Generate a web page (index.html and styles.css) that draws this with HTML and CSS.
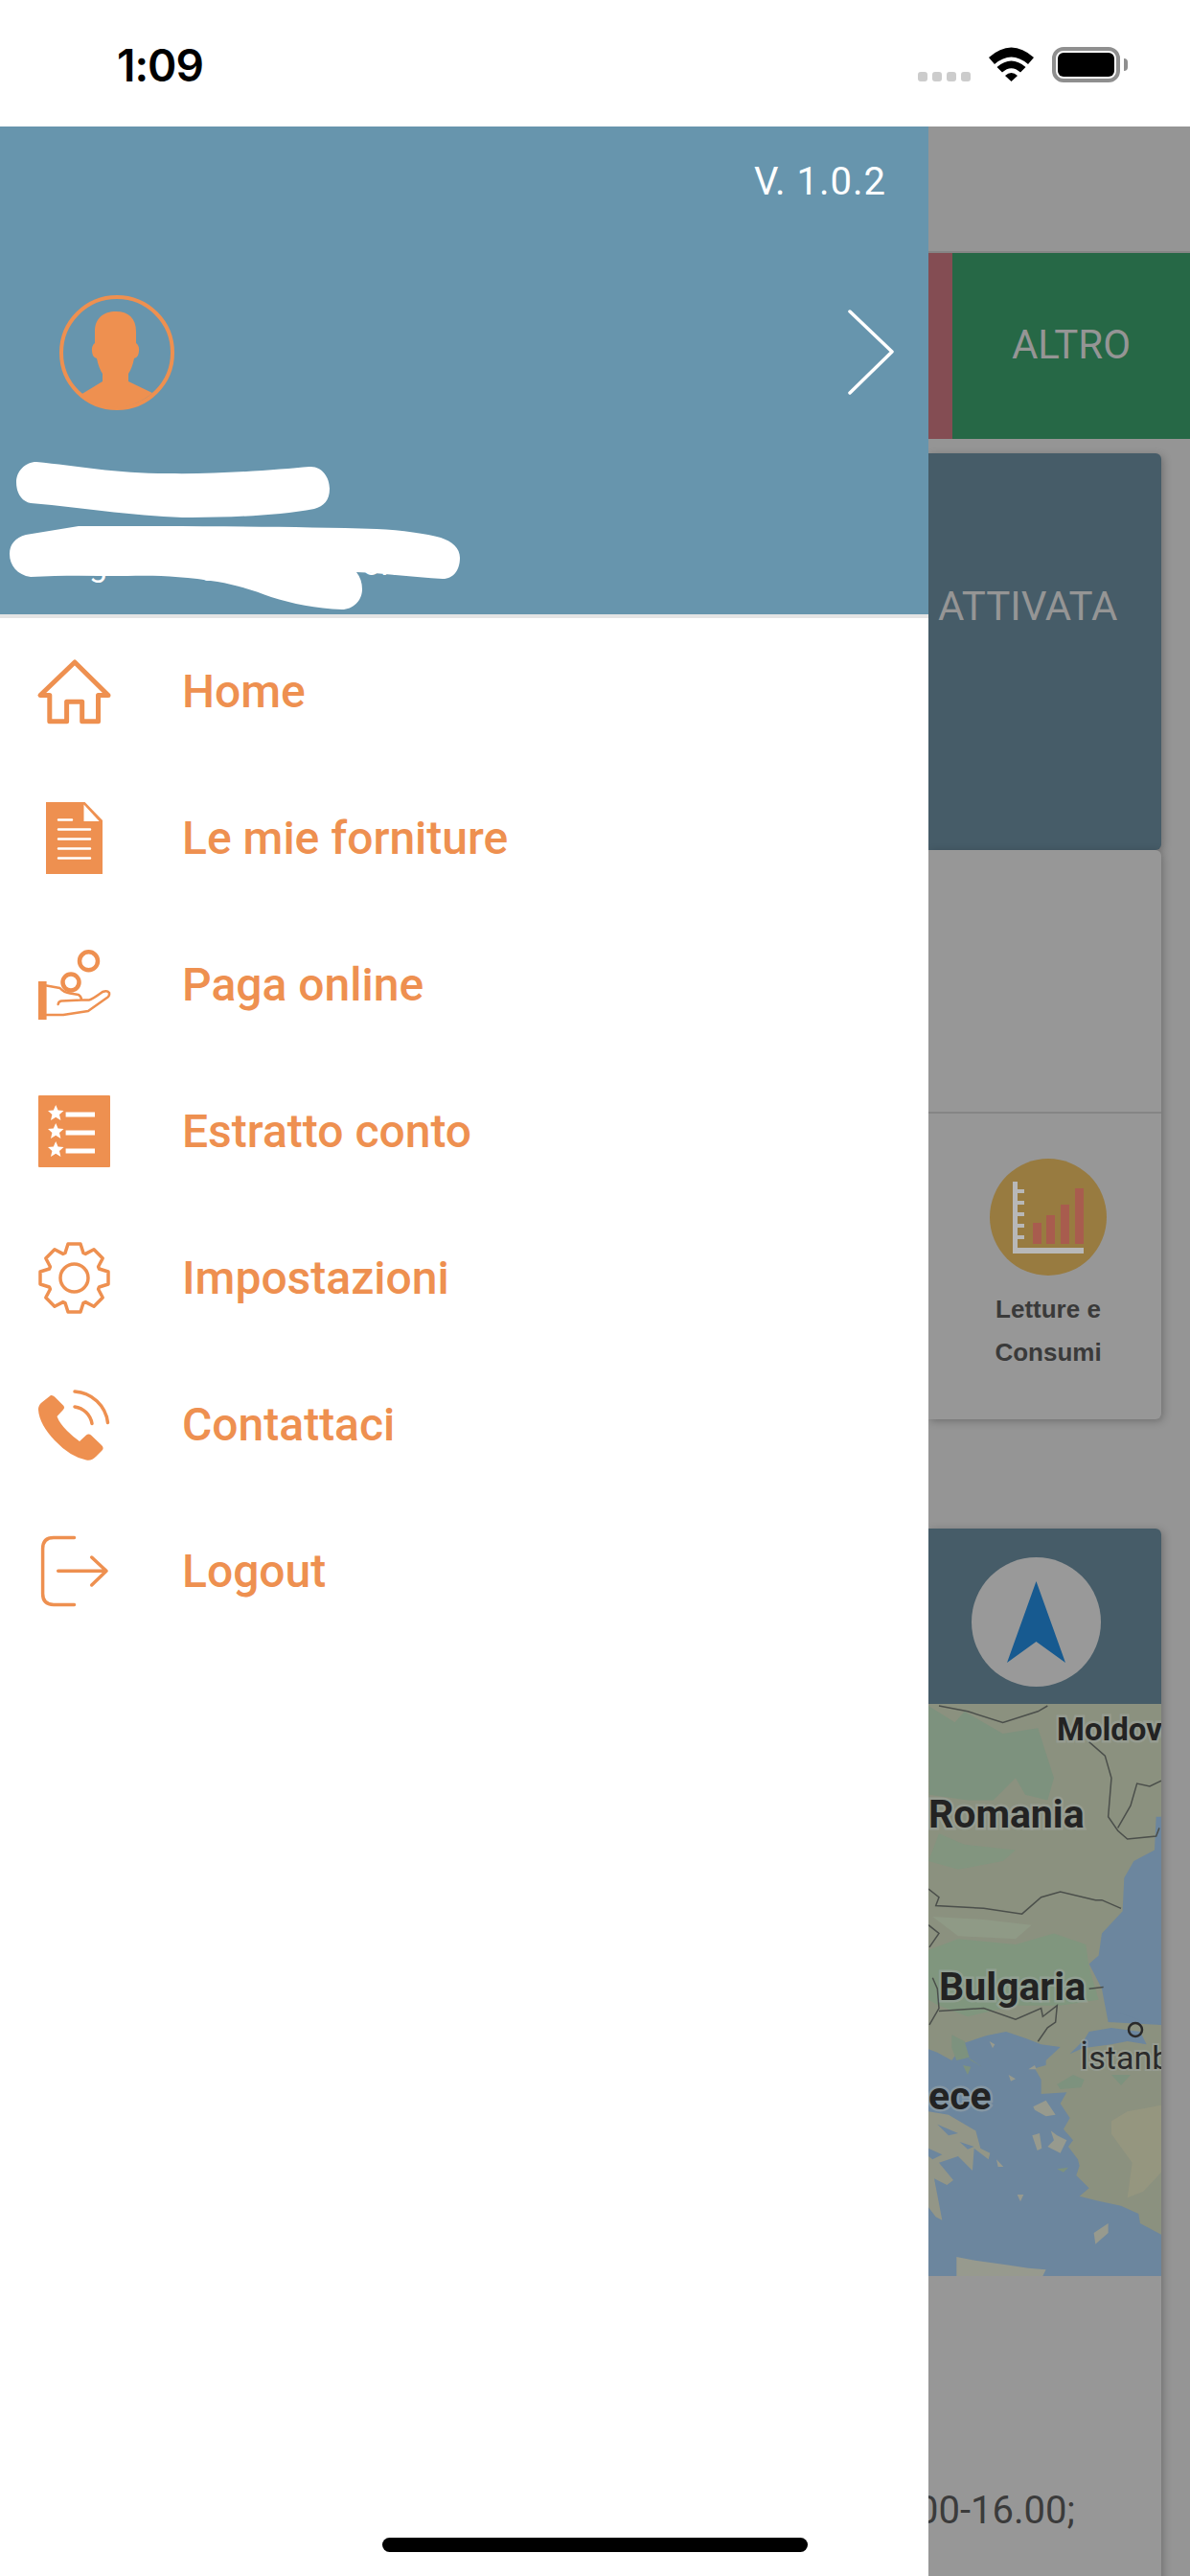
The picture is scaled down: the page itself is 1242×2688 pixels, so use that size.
FILE: index.html
```html
<!DOCTYPE html>
<html lang="it">
<head>
  <meta charset="UTF-8" />
  <meta name="viewport" content="width=device-width, initial-scale=1" />
  <title>Menu</title>
  <link rel="stylesheet" href="styles.css">
</head>
<body>

  <div class="status-bar">
    <div class="clock">1:09</div>
    <div class="status-icons">
      <div class="signal"><span></span><span></span><span></span><span></span></div>
      <svg class="wifi" viewBox="0 0 47 36">
        <path d="M0 11 Q23.500 -10 47 11 L41 18 Q23.500 3 6 18 Z"/>
        <path d="M8.500 21 Q23.500 8 38.500 21 L33 26.500 Q23.500 18 14 26.500 Z"/>
        <path d="M17 30 Q23.500 24 30 30 L23.500 36 Z"/>
      </svg>
      <div class="battery"><div class="battery-level"></div></div>
      <div class="battery-nub"></div>
    </div>
  </div>

  <div class="screen">

    <div class="drawer">
      <div class="drawer-head">
        <div class="version">V. 1.0.2</div>
        <div class="profile-row">
          <svg class="avatar" viewBox="0 0 120 120">
            <circle cx="60" cy="60" r="58" fill="none" stroke="#ee9050" stroke-width="4"/>
            <path fill="#ee9050" d="M59 17 C72 17 80 24 80 38 L80 50 Q85 54 82 63 Q80 66 78 66 Q76 76 72 82 L72 90 L97 102 A58 58 0 0 1 22 104 L45 90 L45 82 Q41 76 39 66 Q37 66 35 63 Q32 54 37 50 L37 38 C37 24 46 17 59 17 Z"/>
          </svg>
          <svg class="chevron" viewBox="0 0 50 90">
            <path d="M3 2 L47 44 L3 87" fill="none" stroke="#fff" stroke-width="3.500" stroke-linecap="round" stroke-linejoin="round"/>
          </svg>
        </div>
        <!-- nome e email cancellati a mano nello screenshot -->
        <svg class="scribble" viewBox="0 0 500 170">
          <text class="hidden-mail" x="93" y="121">g</text>
          <text class="hidden-mail" x="208" y="119">g</text>
          <text class="hidden-mail" x="378" y="120">om</text>
          <path fill="#fff" d="M38 2 C80 6 120 14 175 14 C230 15 290 10 323 7 C336 6 344 18 344 30 C344 42 338 48 328 51 C290 58 240 60 200 60 C150 60 90 50 32 45 C22 43 17 34 17 23 C17 12 26 2 38 2 Z"/>
          <path fill="#fff" d="M82 69 C180 69 300 69 393 72 C420 73 445 77 460 81 C472 85 480 92 480 102 C480 114 474 124 462 124 C430 122 400 118 372 117 C376 122 378 128 378 135 C378 147 368 156 357 156 C330 155 305 150 283 143 C265 136 245 130 227 127 C190 121 160 120 133 121 C100 121 65 120 32 122 C18 120 10 110 10 98 C10 88 16 81 27 78 Z"/>
        </svg>
      </div>

      <ul class="menu">
        <li class="menu-item">
          <svg class="menu-icon" viewBox="0 0 75 75">
            <path class="line-5" d="M38 7 L2 41.500 L11.800 41.500 L11.800 68.800 L29.600 68.800 L29.600 48.200 L45.700 48.200 L45.700 68.800 L62.500 68.800 L62.500 41.500 L73 41.500 Z"/>
          </svg>
          <span>Home</span>
        </li>
        <li class="menu-item">
          <svg class="menu-icon" viewBox="0 0 75 75">
            <path class="solid" d="M8 0 L48.600 0 L67 19 L67 75 L8 75 Z"/>
            <path fill="#fff" d="M47.500 2.500 L47.500 20 L63.600 20 Z"/>
            <path class="white-line" d="M21 18.500 H35 M21 28.500 H54 M21 38.500 H54 M21 48.500 H54 M21 58.500 H54"/>
          </svg>
          <span>Le mie forniture</span>
        </li>
        <li class="menu-item">
          <svg class="menu-icon" viewBox="0 0 75 75">
            <rect class="solid" x="0" y="34" width="8.600" height="40"/>
            <circle class="line-4" cx="52.500" cy="12.800" r="9.500"/>
            <circle class="line-4" cx="34" cy="35" r="8.500"/>
            <path class="line-2" d="M8.600 38.500 L22.500 41 Q27 46 33 46.500 L42 48 Q45 50 45 53.500 L24 54.500 Q21 55 20.700 58 M45 53.500 L53 53.500 Q56 53 67 45 Q72 43 74 46 Q74.500 49 72.500 50.500 L52 65 L26 69 L8.600 69"/>
          </svg>
          <span>Paga online</span>
        </li>
        <li class="menu-item">
          <svg class="menu-icon" viewBox="0 0 75 75">
            <rect class="solid" x="0" y="0" width="75" height="75" rx="1"/>
            <path fill="#fff" d="M18.200 10 L20.600 15.500 L26.500 16 L22 20 L23.400 26 L18.200 22.800 L13 26 L14.400 20 L10 16 L15.800 15.500 Z"/>
            <path fill="#fff" d="M18.200 29 L20.600 34.500 L26.500 35 L22 39 L23.400 45 L18.200 41.800 L13 45 L14.400 39 L10 35 L15.800 34.500 Z"/>
            <path fill="#fff" d="M18.200 48 L20.600 53.500 L26.500 54 L22 58 L23.400 64 L18.200 60.800 L13 64 L14.400 58 L10 54 L15.800 53.500 Z"/>
            <rect fill="#fff" x="28.600" y="17.500" width="30.400" height="5"/>
            <rect fill="#fff" x="28.600" y="36.500" width="30.400" height="5"/>
            <rect fill="#fff" x="28.600" y="55.500" width="30.400" height="5"/>
          </svg>
          <span>Estratto conto</span>
        </li>
        <li class="menu-item">
          <svg class="menu-icon" viewBox="0 0 75 75">
            <path class="line-3" d="M28 11.500 L31 2 L44 2 L47 11.500 L49.200 12.400 L58 7.800 L67.200 17 L62.600 25.800 L63.500 28 L73 31 L73 44 L63.500 47 L62.600 49.200 L67.200 58 L58 67.200 L49.200 62.600 L47 63.500 L44 73 L31 73 L28 63.500 L25.800 62.600 L17 67.200 L7.800 58 L12.400 49.200 L11.500 47 L2 44 L2 31 L11.500 28 L12.400 25.800 L7.800 17 L17 7.800 L25.800 12.400 Z"/>
            <circle class="line-3" cx="37.500" cy="37.500" r="14.500"/>
          </svg>
          <span>Impostazioni</span>
        </li>
        <li class="menu-item">
          <svg class="menu-icon" viewBox="0 0 75 75">
            <path class="solid" d="M13 7 Q15 6.500 17 8.500 L26.500 18 Q28 20 26 22 L19.500 29 Q22 36 30 44 Q37 51 43 55 L50 48.500 Q52.500 46.500 55 48.500 L66 59 Q69 62 66.500 64.500 L60 71 Q56 75.500 50 74.500 Q33 71 17 54 Q1 37 0 22 Q0 17 3.500 14.500 Z"/>
            <path class="line-3" d="M38 3 A37 37 0 0 1 72.500 35.500 M38 19 A21 21 0 0 1 56 36.500"/>
          </svg>
          <span>Contattaci</span>
        </li>
        <li class="menu-item">
          <svg class="menu-icon" viewBox="0 0 75 75">
            <path class="line-3" d="M37.500 2.500 L16 2.500 Q4.600 2.500 4.600 14 L4.600 61 Q4.600 72.400 16 72.400 L37.500 72.400"/>
            <path class="line-3" d="M20.700 37.300 L71 37.300 M55.700 23 L71 37.300 L55.700 52"/>
          </svg>
          <span>Logout</span>
        </li>
      </ul>
    </div>

    <!-- pagina sotto il menu, oscurata -->
    <div class="peek">
      <div class="top-bar"></div>
      <div class="tabs">
        <div class="tab-red"></div>
        <div class="tab-green">ALTRO</div>
      </div>

      <div class="card status-card">ATTIVATA</div>

      <div class="card actions">
        <div class="actions-top"></div>
        <div class="actions-bottom">
          <div class="action">
            <div class="action-circle">
              <svg viewBox="0 0 74 75" class="chart">
                <path fill="#b8b8b8" d="M0 0 H5 V8 H12 V12 H5 V20 H12 V24 H5 V32 H12 V36 H5 V44 H12 V48 H5 V56 H12 V60 H5 V69 H74 V75 H0 Z"/>
                <rect fill="#a85c4e" x="21" y="43" width="9" height="22"/>
                <rect fill="#a85c4e" x="35" y="35" width="9" height="30"/>
                <rect fill="#a85c4e" x="50" y="24" width="9" height="41"/>
                <rect fill="#a85c4e" x="65" y="7" width="9" height="58"/>
              </svg>
            </div>
            <div class="action-label">Letture e<br>Consumi</div>
          </div>
        </div>
      </div>

      <div class="card nav-card">
        <div class="nav-head">
          <div class="nav-circle">
            <svg class="nav-arrow" viewBox="0 0 61 85">
              <path fill="#175a90" d="M30.500 0 L61 85 L30.500 63 L0 85 Z"/>
            </svg>
          </div>
        </div>

        <svg class="map" viewBox="0 0 243 597">
          <g transform="translate(-9 2) scale(.3333 .579)">
            <rect x="27" y="-4" width="729" height="1034" fill="#8b917f"/>
            <path fill="#7d927e" d="M27 0 L110 30 L140 10 L260 50 L370 40 L420 130 L400 170 L330 160 L300 130 L230 170 L150 170 L30 160 Z"/>
            <path fill="#82957f" d="M60 230 L140 250 L300 260 L260 280 L120 295 L27 280 Z"/>
            <path fill="#80967e" d="M27 440 L120 420 L300 430 L420 410 L520 430 L530 470 L560 530 L440 540 L300 540 L150 560 L60 540 L27 530 Z"/>
            <path fill="#8f9a86" d="M40 380 L200 385 L350 395 L300 420 L120 415 Z"/>
            <path fill="#6c869e" d="M756 200 L740 200 L735 260 L670 280 L640 310 L635 370 L570 410 L560 450 L530 465 L570 510 L590 570 L756 575 Z"/>
          </g>
          <g transform="translate(-9 322) scale(.3333)">
            <path fill="#6c869e" d="M27 115 L55 125 L100 150 L140 95 L210 72 L270 60 L330 80 L380 100 L440 108 L395 150 L395 165 L360 175 L380 210 L380 255 L460 250 L440 285 L470 330 L450 365 L480 400 L465 420 L495 460 L500 480 L490 510 L530 550 L500 575 L560 590 L630 605 L685 630 L690 660 L756 695 L756 825 L27 825 Z"/>
            <path fill="#6c869e" d="M470 130 L515 85 L530 60 L600 48 L690 60 L710 100 L650 90 L600 100 L510 112 Z"/>
            <path fill="#939687" d="M27 310 L90 320 L175 370 L190 425 L220 440 L215 460 L170 425 L165 495 L120 450 L60 470 L105 525 L85 540 L45 520 L70 650 L50 640 L27 610 Z"/>
            <path fill="#6c869e" d="M55 350 L120 378 L90 385 Z M125 405 L170 420 L150 428 Z M27 425 L70 445 L40 460 L27 450 Z"/>
            <path fill="#979a8e" d="M355 295 L395 275 L425 320 L395 325 L360 305 Z M352 385 L375 378 L382 425 L368 432 Z M410 370 L430 385 L460 400 L440 440 L400 420 L420 400 Z M545 690 L590 660 L590 690 L550 725 Z M115 765 L165 775 L270 790 L340 800 L395 805 L385 825 L115 825 Z M305 570 L325 570 L315 592 Z M240 460 L262 483 L245 483 Z M278 195 L300 208 L285 215 Z M218 90 L235 100 L228 112 Z M340 178 L360 165 L365 178 Z"/>
            <path fill="#7d927e" d="M100 70 L140 90 L155 140 L115 150 L100 110 Z M135 165 L160 170 L150 195 Z M150 140 L195 170 L160 150 Z M430 490 L465 485 L450 500 Z M430 225 L480 195 L515 210 L505 235 L440 240 Z M600 195 L660 195 L630 228 Z"/>
            <path fill="#95967f" d="M600 340 L650 310 L756 290 L756 500 L700 560 L650 580 L665 470 L600 380 Z"/>
            <path fill="#6c869e" d="M620 0 L756 0 L756 38 L680 20 Z"/>
          </g>
          <g transform="translate(-9 2) scale(.3333 .579)">
            <path class="map-line" d="M530 65 L580 90 L600 130 L590 200 L620 225 L650 240 L740 235 L750 220 M620 220 L660 180 L680 140 L720 145 L756 135 M60 0 L150 10 L260 30 L370 10 L400 0 M27 330 L60 345 L50 360 L200 365 L320 375 L380 345 L440 335 L550 350 L570 350 L630 365 M27 395 L60 410 L30 435 M40 490 L55 510 L60 545 L30 575 M60 550 L200 545 L300 565 L380 545 L385 560 L430 540 L425 570 L400 580 L370 605 M530 510 L575 507"/>
          </g>
          <circle cx="216" cy="340" r="7" fill="none" stroke="#2a2a2a" stroke-width="2.500"/>
          <text class="map-name map-small" x="134" y="38">Moldova</text>
          <text class="map-name" x="0" y="129">Romania</text>
          <text class="map-name" x="11" y="309">Bulgaria</text>
          <text class="map-name" x="0" y="423">ece</text>
          <text class="map-city" x="158" y="381">İstanbul</text>
        </svg>

        <div class="hours"><span>.00-16.00;</span></div>
      </div>
    </div>
  </div>

  <div class="home-indicator"></div>

</body>
</html>
```

FILE: styles.css
```css
* {
  box-sizing: border-box;
  margin: 0;
  padding: 0;
}

html, body {
  width: 1242px;
  height: 2688px;
  overflow: hidden;
  background: #fff;
  font-family: Roboto, sans-serif;
}

/* Status bar */
.status-bar {
  height: 132px;
  display: flex;
  justify-content: space-between;
  align-items: flex-start;
  padding: 49px 65px 0 122px;
}

.clock {
  font-family: Inter, sans-serif;
  font-size: 46px;
  font-weight: 600;
  line-height: 38px;
  letter-spacing: -1px;
  color: #000;
}

.status-icons {
  display: flex;
  align-items: flex-start;
}

.signal {
  display: flex;
  gap: 5px;
  margin: 26px 19px 0 0;
}

.signal span {
  width: 10px;
  height: 10px;
  border-radius: 3px;
  background: #ccc;
}

.wifi {
  width: 47px;
  height: 36px;
  margin-right: 19px;
}

.battery {
  width: 71px;
  height: 37px;
  padding: 2px;
  border: 4px solid #8f8f8f;
  border-radius: 12px;
}

.battery-level {
  height: 100%;
  background: #000;
  border-radius: 6px;
}

.battery-nub {
  width: 4px;
  height: 13px;
  margin: 12px 0 0 4px;
  background: #8f8f8f;
  border-radius: 0 4px 4px 0;
}

/* Split screen */
.screen {
  display: flex;
  height: 2556px;
}

/* Drawer */
.drawer {
  width: 969px;
  flex: none;
  background: #fff;
}

.drawer-head {
  height: 513px;
  background: #6795ad;
  border-bottom: 4px solid #e4e4e4;
  padding-top: 42px;
}

.version {
  text-align: right;
  padding-right: 44px;
  font-size: 40px;
  line-height: 32px;
  letter-spacing: 1px;
  color: #fff;
}

.profile-row {
  display: flex;
  justify-content: space-between;
  align-items: center;
  padding: 0 35px 0 62px;
  margin-top: 102px;
}

.avatar {
  width: 120px;
  height: 120px;
}

.chevron {
  width: 50px;
  height: 90px;
}

.scribble {
  display: block;
  width: 500px;
  height: 170px;
  margin-top: 52px;
}

.hidden-mail {
  font-family: Roboto, sans-serif;
  font-size: 34px;
  fill: #fff;
}

.menu {
  list-style: none;
}

.menu-item {
  display: flex;
  align-items: center;
  height: 153px;
  padding-left: 40px;
  gap: 75px;
  font-size: 48px;
  font-weight: 500;
  color: #ee9050;
}

.menu-icon {
  width: 75px;
  height: 75px;
  flex: none;
  overflow: visible;
}

.solid {
  fill: #ee9050;
}

.line-5, .line-4, .line-3, .line-2 {
  fill: none;
  stroke: #ee9050;
  stroke-linejoin: round;
  stroke-linecap: round;
}

.line-5 { stroke-width: 5; }
.line-4 { stroke-width: 4.5; }
.line-3 { stroke-width: 3.5; }
.line-2 { stroke-width: 2.5; }

.white-line {
  fill: none;
  stroke: #fff;
  stroke-width: 2.5;
  stroke-linecap: round;
}

/* Page behind the drawer */
.peek {
  flex: 1;
  min-width: 0;
  overflow: hidden;
  background: #959595;
}

.top-bar {
  height: 130px;
  border-bottom: 2px solid #858585;
  box-sizing: content-box;
}

.tabs {
  display: flex;
  height: 194px;
}

.tab-red {
  width: 25px;
  background: #844d53;
}

.tab-green {
  flex: 1;
  display: flex;
  align-items: center;
  justify-content: center;
  padding-bottom: 3px;
  background: #266846;
  color: #959595;
  font-size: 42px;
}

.card {
  width: 243px;
  box-shadow: 2px 2px 8px rgba(0, 0, 0, 0.25);
  border-radius: 0 6px 6px 0;
}

.status-card {
  height: 414px;
  margin-top: 15px;
  padding: 136px 0 0 10px;
  background: #465c68;
  color: #959595;
  font-size: 42px;
  line-height: 48px;
  white-space: nowrap;
}

.actions {
  height: 594px;
  background: #979797;
}

.actions-top {
  height: 273px;
  border-bottom: 2px solid #858585;
  box-sizing: content-box;
}

.actions-bottom {
  padding: 47px 0 0 35px;
}

.action {
  width: 180px;
  display: flex;
  flex-direction: column;
  align-items: center;
}

.action-circle {
  width: 122px;
  height: 122px;
  border-radius: 50%;
  background: #987b40;
  display: flex;
  align-items: center;
  justify-content: center;
}

.chart {
  width: 74px;
  height: 75px;
}

.action-label {
  margin-top: 13px;
  font-family: "Liberation Sans", sans-serif;
  font-size: 26px;
  font-weight: 700;
  line-height: 45px;
  text-align: center;
  color: #3a3a3a;
}

.nav-card {
  margin-top: 114px;
  height: 1100px;
  background: #979797;
  border-radius: 0 6px 0 0;
}

.nav-head {
  height: 183px;
  padding: 30px 0 0 45px;
  background: #465c68;
  border-radius: 0 6px 0 0;
}

.nav-circle {
  width: 135px;
  height: 135px;
  border-radius: 50%;
  background: #999;
  display: flex;
  align-items: center;
  justify-content: center;
}

.nav-arrow {
  width: 61px;
  height: 85px;
}

.map {
  display: block;
  width: 243px;
  height: 597px;
}

.map-line {
  fill: none;
  stroke: #4b4f4b;
  stroke-width: 1.5;
  vector-effect: non-scaling-stroke;
}

.map-name {
  font-family: Roboto, sans-serif;
  font-size: 41px;
  font-weight: 700;
  fill: #232323;
  stroke: rgba(165, 172, 170, 0.45);
  stroke-width: 5px;
  paint-order: stroke;
}

.map-small {
  font-size: 33px;
}

.map-city {
  font-family: Roboto, sans-serif;
  font-size: 34px;
  fill: #2a2a2a;
  stroke: rgba(165, 172, 170, 0.45);
  stroke-width: 4px;
  paint-order: stroke;
}

.hours {
  display: flex;
  justify-content: flex-end;
  width: 153px;
  margin-top: 220px;
  font-size: 40px;
  line-height: 50px;
  white-space: nowrap;
  color: #3b3b3b;
}

.hours span {
  flex: none;
}

/* Home indicator lies over everything */
.home-indicator {
  position: absolute;
  left: 399px;
  top: 2648px;
  width: 444px;
  height: 15px;
  border-radius: 8px;
  background: #000;
}
```
